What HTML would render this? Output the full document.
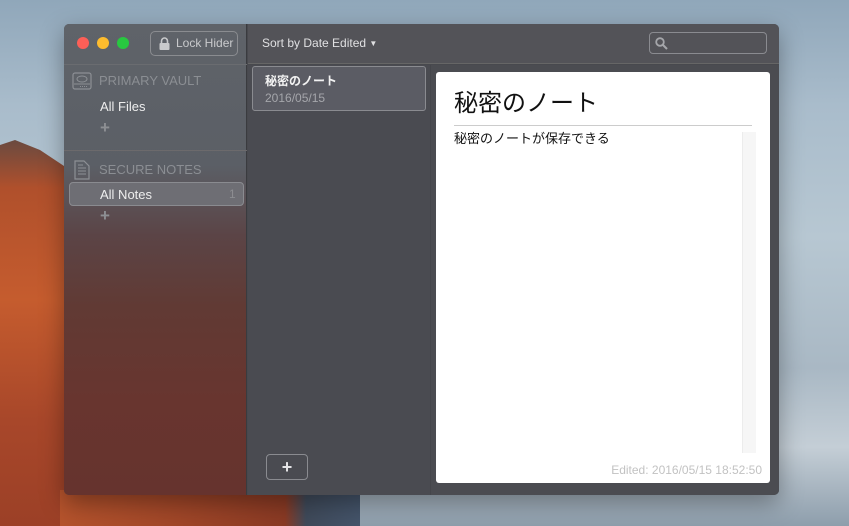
<!DOCTYPE html>
<html><head><meta charset="utf-8">
<style>
*{margin:0;padding:0;box-sizing:border-box}
html,body{width:849px;height:526px;overflow:hidden}
body{position:relative;font-family:"Liberation Sans","Noto Sans CJK JP",sans-serif;
background:linear-gradient(180deg,#90a7ba 0%,#a9bccb 20%,#b7c7d2 45%,#a9b8c4 70%,#c4ced6 85%,#8e9eac 100%);}
.c1{position:absolute;left:0;top:140px;width:70px;height:400px;
background:linear-gradient(180deg,#6a4a40 0%,#b0502c 12%,#c55c2e 40%,#a8472a 70%,#9a3f26 100%);
clip-path:polygon(0 5px,15px 0,40px 10px,70px 30px,70px 400px,0 400px)}
.c2{position:absolute;left:60px;top:490px;width:300px;height:40px;
background:linear-gradient(90deg,#b5532c 0%,#a04628 40%,#8a3a24 75%,#3f4a5a 82%,#44546a 100%);}
.win{position:absolute;left:64px;top:24px;width:715px;height:471px;border-radius:5px;overflow:hidden;background:#48494e;box-shadow:0 8px 24px rgba(0,0,0,.35)}
.side{position:absolute;left:0;top:0;width:183px;height:471px;
background:linear-gradient(180deg,#5f6369 0%,#5b5f66 30%,#5b4446 45%,#613a34 60%,#68352f 80%,#66332e 100%);border-right:1px solid #3a3b3f}
.top{position:absolute;left:184px;top:0;right:0;height:40px;background:#535358;border-bottom:1px solid #666}
.list{position:absolute;left:184px;top:41px;width:183px;bottom:0;background:#4a4b51;border-right:1px solid #45464b}
.right{position:absolute;left:367px;top:41px;right:0;bottom:0;background:#4b4c51}
.dot{position:absolute;top:13px;width:12px;height:12px;border-radius:50%}
.lock{position:absolute;left:86px;top:7px;width:88px;height:25px;border:1px solid #8a8c90;border-radius:5px;color:#c9cacc;font-size:12px;line-height:23px;padding-left:25px}
.hdr{position:absolute;left:35px;font-size:13px;color:#8b8e93}
.item{position:absolute;left:36px;font-size:13px;color:#eee}
.plus{position:absolute;left:36px;font-size:17px;color:#8d8f93;font-weight:bold}
.sel{position:absolute;left:5px;top:158px;width:175px;height:24px;border:1px solid #8a8b90;border-radius:4px;background:#6e6e74}
.card{position:absolute;left:372px;top:48px;width:334px;height:411px;background:#fff;border-radius:3px}
</style></head><body>
<div class="c1"></div>
<div class="c2"></div>
<div class="win">
  <div class="side">
    <div class="dot" style="left:13px;background:#fc5f57"></div>
    <div class="dot" style="left:33px;background:#fdbc2e"></div>
    <div class="dot" style="left:53px;background:#28c840"></div>
    <div class="lock"><svg style="position:absolute;left:8px;top:5px" width="11" height="13" viewBox="0 0 11 13"><path d="M2.5 6V4a3 3 0 0 1 6 0v2" fill="none" stroke="#c9cacc" stroke-width="1.6"/><rect x="0.5" y="6" width="10" height="7" rx="1" fill="#c9cacc"/></svg>Lock Hider</div>
    <div style="position:absolute;left:0;top:40px;width:183px;height:1px;background:#6a6c70"></div>
    <svg style="position:absolute;left:8px;top:48px" width="20" height="18" viewBox="0 0 20 18"><rect x="1" y="1" width="18" height="16" rx="2" fill="none" stroke="#8d9095" stroke-width="1.2"/><ellipse cx="10" cy="7" rx="5" ry="3" fill="none" stroke="#8d9095"/><line x1="2" y1="12" x2="18" y2="12" stroke="#8d9095"/><path d="M8 14.5h8" stroke="#8d9095" stroke-dasharray="1 1"/></svg>
    <div class="hdr" style="top:49px">PRIMARY VAULT</div>
    <div class="item" style="top:75px">All Files</div>
    <div class="plus" style="top:94px">+</div>
    <div style="position:absolute;left:0;top:126px;width:183px;height:1px;background:#6c6a6c"></div>
    <svg style="position:absolute;left:10px;top:136px" width="16" height="20" viewBox="0 0 16 20"><path d="M1 1h9l5 5v13H1z" fill="none" stroke="#8d9095" stroke-width="1.2"/><path d="M4 8h8M4 11h8M4 14h8M4 5h5" stroke="#8d9095"/></svg>
    <div class="hdr" style="top:138px">SECURE NOTES</div>
    <div class="sel"></div>
    <div class="item" style="top:163px">All Notes</div>
    <div style="position:absolute;left:165px;top:163px;font-size:12px;color:#8c8d91">1</div>
    <div class="plus" style="top:182px">+</div>
  </div>
  <div class="top">
    <div style="position:absolute;left:14px;top:12px;font-size:12px;color:#e0e0e2">Sort by Date Edited <span style="font-size:8px;position:relative;top:-1px">▼</span></div>
    <div style="position:absolute;left:401px;top:8px;width:118px;height:22px;border:1px solid #8a8b90;border-radius:4px">
      <svg style="position:absolute;left:5px;top:4px" width="13" height="13" viewBox="0 0 13 13"><circle cx="5" cy="5" r="3.8" fill="none" stroke="#a5a6aa" stroke-width="1.8"/><line x1="8" y1="8" x2="12" y2="12" stroke="#a5a6aa" stroke-width="2"/></svg>
    </div>
  </div>
  <div class="list">
    <div style="position:absolute;left:4px;top:1px;width:174px;height:45px;border:1px solid #8a8b90;border-radius:3px;background:#5b5c64">
      <div style="position:absolute;left:12px;top:5px;font-size:12px;color:#f2f2f2;font-weight:bold">秘密のノート</div>
      <div style="position:absolute;left:12px;top:24px;font-size:12px;color:#a5a6ab">2016/05/15</div>
    </div>
    <div style="position:absolute;left:18px;top:389px;width:42px;height:26px;border:1px solid #8a8b90;border-radius:4px;color:#e4e4e6;font-size:18px;font-weight:bold;text-align:center;line-height:24px">+</div>
  </div>
  <div class="right"></div>
  <div class="card">
    <div style="position:absolute;left:18px;top:11px;font-size:24px;color:#111">秘密のノート</div>
    <div style="position:absolute;left:18px;top:53px;width:298px;height:1px;background:#ccc"></div>
    <div style="position:absolute;left:18px;top:56px;font-size:13px;color:#111">秘密のノートが保存できる</div>
    <div style="position:absolute;left:306px;top:60px;width:14px;height:321px;background:#f6f6f6;border-left:1px solid #ececec"></div>
    <div style="position:absolute;right:8px;top:391px;font-size:12px;color:#c2c2c2">Edited: 2016/05/15 18:52:50</div>
  </div>
</div>
</body></html>
